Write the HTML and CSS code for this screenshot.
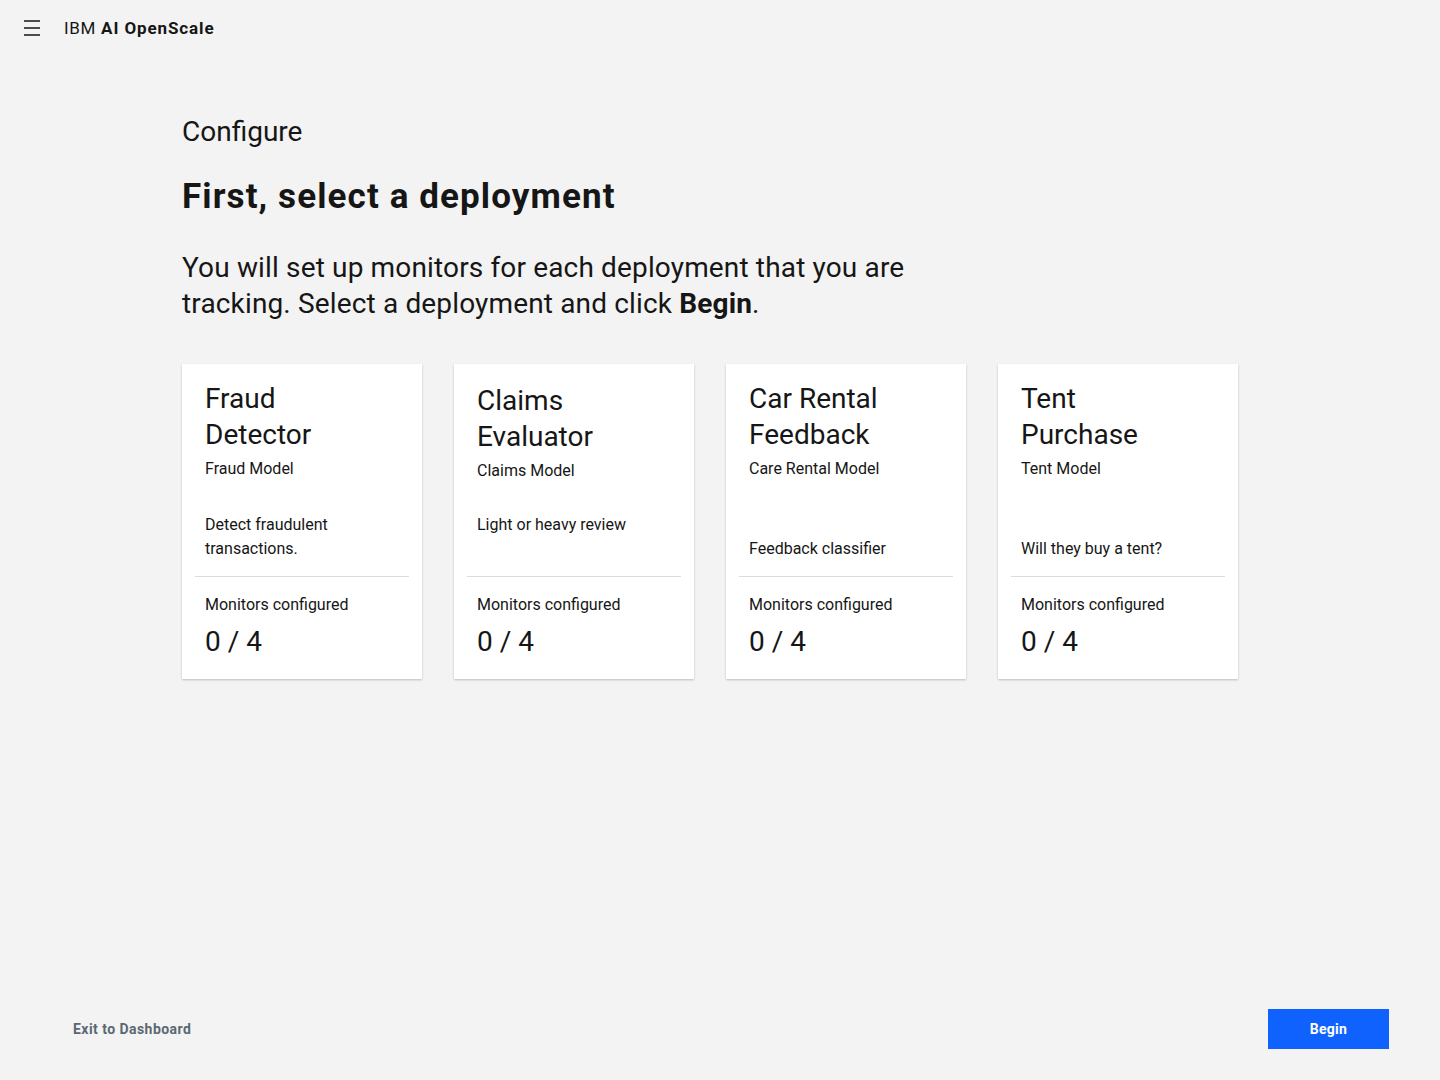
FILE: index.html
```html
<!DOCTYPE html>
<html lang="en">
<head>
<meta charset="utf-8">
<title>IBM AI OpenScale – Configure</title>
<link rel="stylesheet" href="styles.css">
</head>
<body>
<header class="masthead">
  <button class="menu-btn" aria-label="Menu">
    <svg width="16" height="16" viewBox="0 0 16 16" aria-hidden="true">
      <rect x="0" y="0.25" width="16" height="1.5" fill="#161616"/>
      <rect x="0" y="7.25" width="16" height="1.5" fill="#161616"/>
      <rect x="0" y="14.25" width="16" height="1.5" fill="#161616"/>
    </svg>
  </button>
  <span class="brand">IBM <strong>AI OpenScale</strong></span>
</header>

<main class="content">
  <p class="eyebrow">Configure</p>
  <h1 class="title">First, select a deployment</h1>
  <p class="lead">You will set up monitors for each deployment that you are tracking. Select a deployment and click <strong>Begin</strong>.</p>

  <div class="cards">
    <div class="card">
      <h2 class="card-title">Fraud Detector</h2>
      <p class="card-sub">Fraud Model</p>
      <div class="card-desc">Detect fraudulent transactions.</div>
      <div class="card-foot">
        <p class="card-label">Monitors configured</p>
        <p class="card-count">0 / 4</p>
      </div>
    </div>
    <div class="card card--shifted">
      <h2 class="card-title">Claims Evaluator</h2>
      <p class="card-sub">Claims Model</p>
      <div class="card-desc card-desc--top">Light or heavy review</div>
      <div class="card-foot">
        <p class="card-label">Monitors configured</p>
        <p class="card-count">0 / 4</p>
      </div>
    </div>
    <div class="card">
      <h2 class="card-title">Car Rental Feedback</h2>
      <p class="card-sub">Care Rental Model</p>
      <div class="card-desc">Feedback classifier</div>
      <div class="card-foot">
        <p class="card-label">Monitors configured</p>
        <p class="card-count">0 / 4</p>
      </div>
    </div>
    <div class="card">
      <h2 class="card-title">Tent Purchase</h2>
      <p class="card-sub">Tent Model</p>
      <div class="card-desc">Will they buy a tent?</div>
      <div class="card-foot">
        <p class="card-label">Monitors configured</p>
        <p class="card-count">0 / 4</p>
      </div>
    </div>
  </div>
</main>

<footer class="actions">
  <a class="exit-link" href="#">Exit to Dashboard</a>
  <button class="begin-btn">Begin</button>
</footer>
</body>
</html>
```

FILE: styles.css
```css
* { box-sizing: border-box; }

html, body {
  margin: 0;
  padding: 0;
}

body {
  min-height: 100vh;
  display: flex;
  flex-direction: column;
  background: #f3f3f3;
  color: #161616;
  font-family: Roboto, "Liberation Sans", Arial, sans-serif;
}

p, h1, h2 { margin: 0; }

/* header */
.masthead {
  height: 56px;
  display: flex;
  align-items: center;
  padding-left: 24px;
  gap: 24px;
}

.menu-btn {
  width: 16px;
  height: 16px;
  padding: 0;
  border: 0;
  background: none;
  display: flex;
}

.brand {
  font-size: 17px;
  line-height: 20px;
  color: #161616;
  letter-spacing: 0.7px;
}

.brand strong {
  font-weight: 700;
  letter-spacing: 0.9px;
}

/* main */
.content {
  flex: 1;
  padding: 58px 0 0 182px;
}

.eyebrow {
  font-size: 28px;
  line-height: 36px;
  font-weight: 400;
  color: #161616;
}

.title {
  margin-top: 25px;
  font-size: 35px;
  line-height: 44px;
  font-weight: 700;
  letter-spacing: 1.1px;
  color: #161616;
}

.lead {
  margin-top: 31px;
  max-width: 770px;
  font-size: 28px;
  line-height: 36px;
  font-weight: 400;
  letter-spacing: 0.15px;
  color: #161616;
}

.lead strong { font-weight: 700; }

.cards {
  margin-top: 42px;
  display: flex;
  gap: 32px;
}

.card {
  width: 240px;
  height: 315px;
  background: #ffffff;
  box-shadow: 0 1px 2px rgba(0, 0, 0, 0.22);
  padding: 17px 13px 19px;
  display: flex;
  flex-direction: column;
}

.card--shifted {
  padding-top: 19px;
}

.card-title,
.card-sub,
.card-desc,
.card-label,
.card-count {
  padding: 0 10px;
}

.card-title {
  max-width: 180px;
  font-size: 28px;
  line-height: 36px;
  font-weight: 400;
  color: #161616;
}

.card-sub {
  margin-top: 4px;
  font-size: 16px;
  line-height: 24px;
  color: #161616;
}

.card-desc {
  flex: 1;
  display: flex;
  flex-direction: column;
  justify-content: flex-end;
  padding-top: 32px;
  padding-bottom: 15px;
  font-size: 16px;
  line-height: 24px;
  color: #161616;
}

.card-desc--top {
  justify-content: flex-start;
  padding-top: 30px;
}

.card-foot {
  border-top: 1px solid #dcdcdc;
  padding-top: 16px;
}

.card-label {
  font-size: 16px;
  line-height: 24px;
  color: #161616;
}

.card-count {
  margin-top: 7px;
  font-size: 28px;
  line-height: 36px;
  font-weight: 400;
  color: #161616;
}

/* footer */
.actions {
  display: flex;
  justify-content: space-between;
  align-items: center;
  padding: 0 51px 31px 73px;
}

.exit-link {
  font-size: 14px;
  line-height: 18px;
  font-weight: 700;
  letter-spacing: 0.45px;
  color: #5a6872;
  text-decoration: none;
  margin-bottom: 1px;
}

.begin-btn {
  width: 121px;
  height: 40px;
  border: 0;
  background: #0f62fe;
  color: #ffffff;
  font-family: inherit;
  font-size: 14px;
  font-weight: 700;
  letter-spacing: 0.3px;
}
```
